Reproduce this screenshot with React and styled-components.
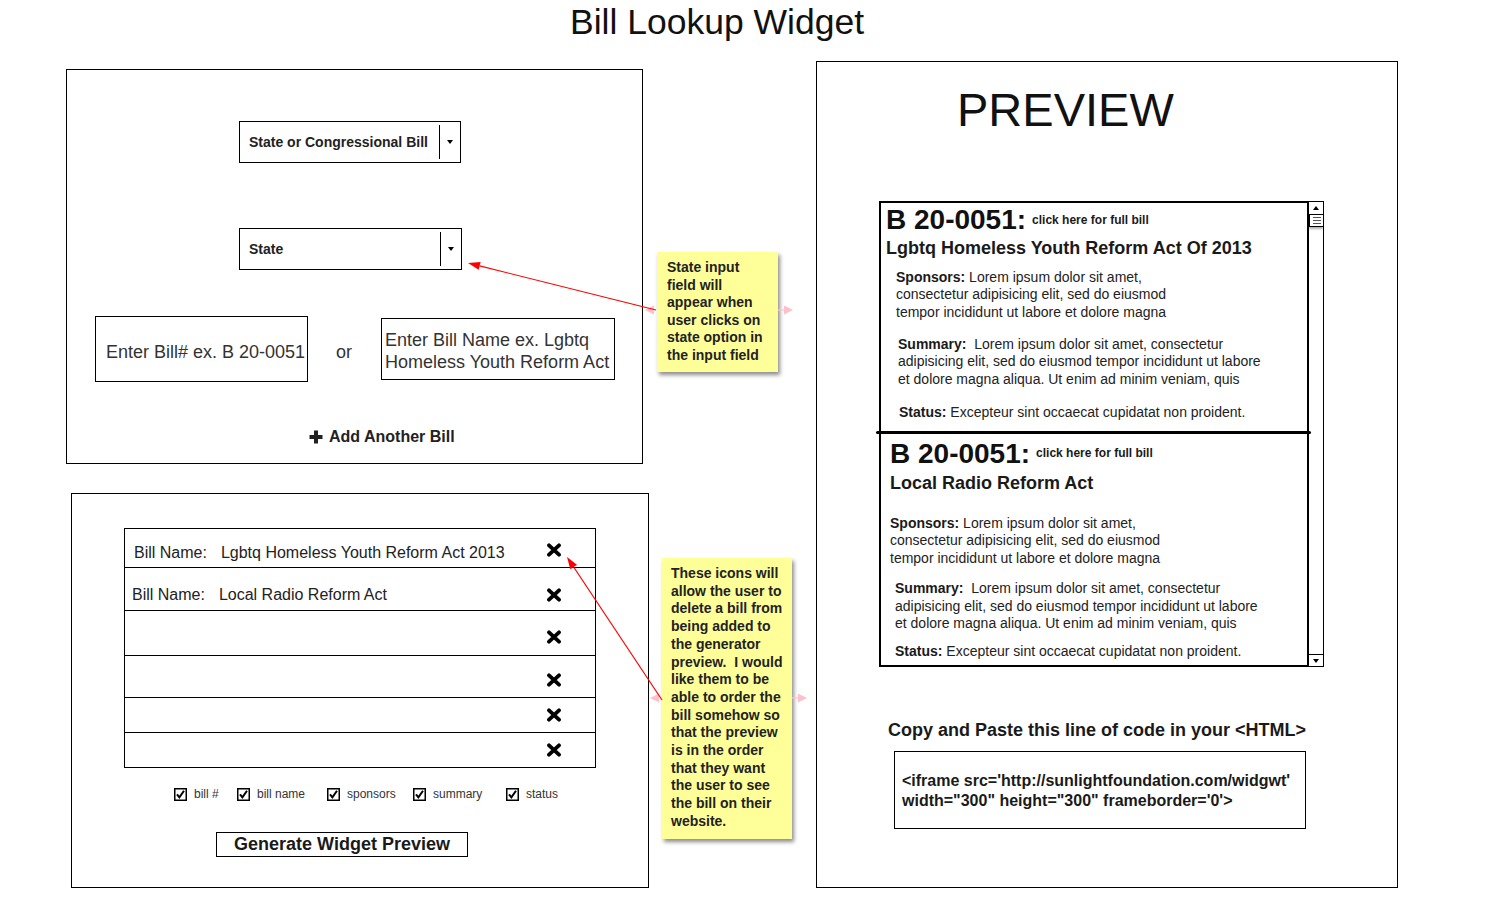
import React from 'react';
import styled, { createGlobalStyle } from 'styled-components';

const GlobalStyle = createGlobalStyle`
  html, body { margin: 0; padding: 0; background: #fff; }
  body { font-family: "Liberation Sans", Arial, Helvetica, sans-serif; color: #222; }
  *, *::before, *::after { box-sizing: border-box; }
`;

const Page = styled.div`
  position: relative;
  width: 1512px;
  height: 924px;
  overflow: hidden;
`;

const Title = styled.h1`
  margin: 0;
  width: 1434px;
  height: 61px;
  padding-top: 2px;
  font-size: 35.5px;
  font-weight: 400;
  line-height: 41px;
  text-align: center;
  color: #111;
`;

const Board = styled.div`
  display: flex;
  align-items: flex-start;
`;

const LeftColumn = styled.div`
  width: 649px;
  padding-top: 8px;
  display: flex;
  flex-direction: column;
  align-items: flex-start;
`;

const Panel = styled.section`
  margin-left: ${(p) => p.$left}px;
  margin-top: ${(p) => p.$top || 0}px;
  width: ${(p) => p.$w}px;
  height: ${(p) => p.$h}px;
  padding-top: ${(p) => p.$pt || 0}px;
  border: 1px solid #000;
  display: flex;
  flex-direction: column;
  align-items: flex-start;
  background: #fff;
`;

/* ---------- select ---------- */
const SelectBox = styled.div`
  margin-left: 172px;
  margin-top: ${(p) => p.$mt || 0}px;
  width: ${(p) => p.$w}px;
  height: 42px;
  border: 1px solid #000;
  display: flex;
  align-items: stretch;
`;
const SelectLabel = styled.span`
  flex: 1;
  display: flex;
  align-items: center;
  padding-left: 9px;
  font-size: 14px;
  font-weight: 700;
  color: #222;
`;
const SelectDivider = styled.span`
  width: 1px;
  margin: 3px 0;
  background: #000;
`;
const SelectArrow = styled.span`
  width: 20px;
  display: flex;
  align-items: center;
  justify-content: center;
  &::after {
    content: '';
    border-left: 3.5px solid transparent;
    border-right: 3.5px solid transparent;
    border-top: 4px solid #000;
  }
`;

const Select = ({ w, mt, children }) => (
  <SelectBox $w={w} $mt={mt}>
    <SelectLabel>{children}</SelectLabel>
    <SelectDivider />
    <SelectArrow />
  </SelectBox>
);

/* ---------- inputs ---------- */
const InputRow = styled.div`
  margin: 46px 0 0 28px;
  display: flex;
  align-items: center;
`;
const TextField = styled.div`
  width: ${(p) => p.$w}px;
  height: ${(p) => p.$h}px;
  border: 1px solid #000;
  display: flex;
  align-items: center;
  padding: ${(p) => p.$pad};
  font-size: 18px;
  line-height: 22px;
  color: #333;
  white-space: nowrap;
`;
const OrText = styled.span`
  margin: 0 29px 0 28px;
  padding-top: 6px;
  font-size: 18px;
  color: #333;
`;

const AddBill = styled.div`
  margin: 46px 0 0 242px;
  display: flex;
  align-items: center;
  gap: 6px;
  font-size: 16px;
  font-weight: 700;
  line-height: 18px;
  color: #222;
`;

/* ---------- bill list ---------- */
const BillList = styled.div`
  margin-left: 52px;
  width: 472px;
  border: 1px solid #000;
  display: flex;
  flex-direction: column;
`;
const BillRow = styled.div`
  height: ${(p) => p.$h}px;
  padding-left: ${(p) => p.$pl || 0}px;
  padding-top: ${(p) => p.$pt || 0}px;
  border-bottom: ${(p) => (p.$last ? 'none' : '1px solid #000')};
  display: flex;
  align-items: center;
  font-size: 16px;
  color: #222;
`;
const RowLabel = styled.span`
  flex: 1;
  white-space: nowrap;
`;
const RowValue = styled.span`
  margin-left: 14px;
`;
const DeleteBox = styled.span`
  display: flex;
  margin-right: 33px;
  margin-top: ${(p) => p.$mt || 0}px;
`;

const DeleteIcon = ({ mt }) => (
  <DeleteBox $mt={mt}>
    <svg width="16" height="14" viewBox="0 0 16 14" aria-hidden="true">
      <path d="M3 2.3 L13 11.7 M13 2.3 L3 11.7" stroke="#000" strokeWidth="3.8" strokeLinecap="round" />
    </svg>
  </DeleteBox>
);

const CheckRow = styled.div`
  margin: 20px 0 0 102px;
  display: flex;
  align-items: center;
`;
const CheckItem = styled.label`
  width: ${(p) => (p.$w ? `${p.$w}px` : 'auto')};
  display: flex;
  align-items: center;
  gap: 7px;
  font-size: 12px;
  line-height: 13px;
  color: #333;
`;
const CheckBox = () => (
  <svg width="13" height="13" viewBox="0 0 13 13" aria-hidden="true">
    <rect x="0.75" y="0.75" width="11.5" height="11.5" fill="#fff" stroke="#000" strokeWidth="1.5" />
    <path d="M3 6.4 L5.4 9.4 L10 2.8" fill="none" stroke="#000" strokeWidth="2" />
  </svg>
);

const GenerateButton = styled.button`
  margin: 31px 0 0 144px;
  width: 252px;
  height: 25px;
  padding: 0;
  border: 1px solid #000;
  background: #fff;
  display: flex;
  align-items: center;
  justify-content: center;
  font-family: "Liberation Sans", Arial, sans-serif;
  font-size: 18px;
  font-weight: 700;
  color: #1a1a1a;
`;

/* ---------- sticky notes ---------- */
const NotesColumn = styled.div`
  width: 167px;
  display: flex;
  flex-direction: column;
  align-items: flex-start;
`;
const Sticky = styled.aside`
  margin: ${(p) => p.$mt}px 0 0 ${(p) => p.$ml}px;
  width: ${(p) => p.$w}px;
  height: ${(p) => p.$h}px;
  padding: 7px 0 0 ${(p) => p.$pl}px;
  background: #ffff9a;
  box-shadow: 2px 3px 4px rgba(0, 0, 0, 0.45);
  font-size: 14px;
  font-weight: 700;
  line-height: ${(p) => p.$lh}px;
  color: #222;
  white-space: nowrap;
`;

/* ---------- preview ---------- */
const PreviewPanel = styled(Panel)``;

const PreviewHeading = styled.h2`
  margin: 21px 0 0 140px;
  font-size: 47px;
  font-weight: 400;
  line-height: 54px;
  color: #111;
`;
const PreviewFrame = styled.div`
  margin: 64px 0 0 62px;
  width: 445px;
  height: 466px;
  display: flex;
`;
const ContentArea = styled.div`
  width: 430px;
  border: 2px solid #000;
  display: flex;
  flex-direction: column;
  align-items: flex-start;
`;
const Scrollbar = styled.div`
  width: 15px;
  border: 1px solid #000;
  border-left: none;
  display: flex;
  flex-direction: column;
`;
const ScrollButton = styled.div`
  height: 12px;
  display: flex;
  align-items: center;
  justify-content: center;
  border-top: ${(p) => (p.$down ? '1px solid #000' : 'none')};
  &::after {
    content: '';
    border-left: 3px solid transparent;
    border-right: 3px solid transparent;
    ${(p) => (p.$down ? 'border-top: 4px solid #000;' : 'border-bottom: 4px solid #000;')}
  }
`;
const ScrollThumb = styled.div`
  height: 13px;
  border: 1px solid #000;
  border-right: none;
  background: #fff;
  box-shadow: 0 2px 2px rgba(0, 0, 0, 0.3);
  display: flex;
  flex-direction: column;
  justify-content: center;
  align-items: center;
  gap: 2px;
`;
const Grip = styled.span`
  width: 8px;
  height: 1px;
  background: #555;
`;
const ScrollTrack = styled.div`
  flex: 1;
`;

const BillCard = styled.div`
  display: flex;
  flex-direction: column;
  align-items: flex-start;
  padding-top: ${(p) => p.$pt || 0}px;
`;
const BillHead = styled.div`
  display: flex;
  align-items: flex-start;
  padding-left: ${(p) => p.$pl}px;
`;
const BillNumber = styled.span`
  font-size: 28px;
  font-weight: 700;
  line-height: 28px;
  color: #111;
`;
const FullLink = styled.span`
  margin: ${(p) => p.$mt}px 0 0 6px;
  font-size: 12px;
  font-weight: 700;
  line-height: 14px;
  color: #1a1a1a;
`;
const BillTitle = styled.div`
  margin-top: ${(p) => p.$mt}px;
  padding-left: ${(p) => p.$pl}px;
  font-size: 18px;
  font-weight: 700;
  line-height: 21px;
  color: #1a1a1a;
`;
const Field = styled.div`
  margin-top: ${(p) => p.$mt}px;
  padding-left: ${(p) => p.$pl}px;
  font-size: 14px;
  line-height: 17.5px;
  color: #222;
  white-space: nowrap;
  b { color: #1a1a1a; }
`;
const CardDivider = styled.div`
  align-self: stretch;
  height: 3px;
  margin: 10px -4px 0 -5px;
  border-radius: 2px;
  background: #000;
`;

const CopyLabel = styled.div`
  margin: 53px 0 0 71px;
  font-size: 18px;
  font-weight: 700;
  line-height: 21px;
  color: #1a1a1a;
`;
const CodeBox = styled.div`
  margin: 10px 0 0 77px;
  width: 412px;
  height: 78px;
  padding: 19px 0 0 7px;
  border: 1px solid #000;
  font-size: 16px;
  font-weight: 700;
  line-height: 20px;
  color: #1a1a1a;
  white-space: nowrap;
`;

/* ---------- connectors ---------- */
const Connectors = styled.svg`
  position: absolute;
  left: 0;
  top: 0;
  pointer-events: none;
`;

const head = (tx, ty, fx, fy, len = 12, half = 4) => {
  const dx = fx - tx;
  const dy = fy - ty;
  const d = Math.hypot(dx, dy);
  const ux = dx / d;
  const uy = dy / d;
  const bx = tx + ux * len;
  const by = ty + uy * len;
  return {
    bx,
    by,
    points: `${tx},${ty} ${bx - uy * half},${by + ux * half} ${bx + uy * half},${by - ux * half}`,
  };
};

const RedArrow = ({ from, to }) => {
  const h = head(to[0], to[1], from[0], from[1]);
  return (
    <g>
      <line x1={from[0]} y1={from[1]} x2={h.bx} y2={h.by} stroke="#f00" strokeWidth="1.2" />
      <polygon points={h.points} fill="#f00" />
    </g>
  );
};

const PinkNub = ({ tip, dir, stub }) => {
  const base = tip[0] - dir * 9;
  return (
    <g>
      {stub && <line x1={stub} y1={tip[1]} x2={base} y2={tip[1]} stroke="#ffc4cc" strokeWidth="1.2" />}
      <polygon points={`${tip[0]},${tip[1]} ${base},${tip[1] - 4.5} ${base},${tip[1] + 4.5}`} fill="#ffc0ca" />
    </g>
  );
};

export default function App() {
  return (
    <Page>
      <GlobalStyle />
      <Title>Bill Lookup Widget</Title>
      <Board>
        <LeftColumn>
          <Panel $left={66} $w={577} $h={395} $pt={51}>
            <Select w={222}>State or Congressional Bill</Select>
            <Select w={223} mt={65}>State</Select>
            <InputRow>
              <TextField $w={213} $h={66} $pad="6px 0 0 10px">Enter Bill# ex. B 20-0051</TextField>
              <OrText>or</OrText>
              <TextField $w={234} $h={62} $pad="4px 0 0 3px">
                Enter Bill Name ex. Lgbtq
                <br />
                Homeless Youth Reform Act
              </TextField>
            </InputRow>
            <AddBill>
              <svg width="14" height="14" viewBox="0 0 14 14" aria-hidden="true">
                <rect x="5" y="0.5" width="4" height="13" fill="#222" />
                <rect x="0.5" y="5" width="13" height="4" fill="#222" />
              </svg>
              Add Another Bill
            </AddBill>
          </Panel>

          <Panel $left={71} $top={29} $w={578} $h={395} $pt={34}>
            <BillList>
              <BillRow $h={39} $pl={9} $pt={10}>
                <RowLabel>
                  Bill Name:<RowValue>Lgbtq Homeless Youth Reform Act 2013</RowValue>
                </RowLabel>
                <DeleteIcon mt={-7} />
              </BillRow>
              <BillRow $h={43} $pl={7} $pt={11}>
                <RowLabel>
                  Bill Name:<RowValue>Local Radio Reform Act</RowValue>
                </RowLabel>
                <DeleteIcon mt={0} />
              </BillRow>
              <BillRow $h={45}>
                <RowLabel />
                <DeleteIcon mt={7} />
              </BillRow>
              <BillRow $h={42}>
                <RowLabel />
                <DeleteIcon mt={6} />
              </BillRow>
              <BillRow $h={35}>
                <RowLabel />
                <DeleteIcon />
              </BillRow>
              <BillRow $h={34} $last>
                <RowLabel />
                <DeleteIcon />
              </BillRow>
            </BillList>

            <CheckRow>
              <CheckItem $w={63}><CheckBox />bill #</CheckItem>
              <CheckItem $w={90}><CheckBox />bill name</CheckItem>
              <CheckItem $w={86}><CheckBox />sponsors</CheckItem>
              <CheckItem $w={93}><CheckBox />summary</CheckItem>
              <CheckItem><CheckBox />status</CheckItem>
            </CheckRow>

            <GenerateButton type="button">Generate Widget Preview</GenerateButton>
          </Panel>
        </LeftColumn>

        <NotesColumn>
          <Sticky $mt={191} $ml={8} $w={121} $h={120} $pl={10} $lh={17.5}>
            State input<br />
            field will<br />
            appear when<br />
            user clicks on<br />
            state option in<br />
            the input field
          </Sticky>
          <Sticky $mt={186} $ml={13} $w={130} $h={281} $pl={9} $lh={17.7}>
            These icons will<br />
            allow the user to<br />
            delete a bill from<br />
            being added to<br />
            the generator<br />
            preview.&nbsp; I would<br />
            like them to be<br />
            able to order the<br />
            bill somehow so<br />
            that the preview<br />
            is in the order<br />
            that they want<br />
            the user to see<br />
            the bill on their<br />
            website.
          </Sticky>
        </NotesColumn>

        <PreviewPanel $left={0} $w={582} $h={827}>
          <PreviewHeading>PREVIEW</PreviewHeading>
          <PreviewFrame>
            <ContentArea>
              <BillCard $pt={3}>
                <BillHead $pl={5}>
                  <BillNumber>B 20-0051:</BillNumber>
                  <FullLink $mt={7}>click here for full bill</FullLink>
                </BillHead>
                <BillTitle $mt={3.5} $pl={5}>Lgbtq Homeless Youth Reform Act Of 2013</BillTitle>
                <Field $mt={10} $pl={15}>
                  <b>Sponsors:</b> Lorem ipsum dolor sit amet,<br />
                  consectetur adipisicing elit, sed do eiusmod<br />
                  tempor incididunt ut labore et dolore magna
                </Field>
                <Field $mt={14.5} $pl={17}>
                  <b>Summary:</b>&nbsp; Lorem ipsum dolor sit amet, consectetur<br />
                  adipisicing elit, sed do eiusmod tempor incididunt ut labore<br />
                  et dolore magna aliqua. Ut enim ad minim veniam, quis
                </Field>
                <Field $mt={15.5} $pl={18}>
                  <b>Status:</b> Excepteur sint occaecat cupidatat non proident.
                </Field>
              </BillCard>
              <CardDivider />
              <BillCard $pt={6}>
                <BillHead $pl={9}>
                  <BillNumber>B 20-0051:</BillNumber>
                  <FullLink $mt={6}>click here for full bill</FullLink>
                </BillHead>
                <BillTitle $mt={5} $pl={9}>Local Radio Reform Act</BillTitle>
                <Field $mt={20.5} $pl={9}>
                  <b>Sponsors:</b> Lorem ipsum dolor sit amet,<br />
                  consectetur adipisicing elit, sed do eiusmod<br />
                  tempor incididunt ut labore et dolore magna
                </Field>
                <Field $mt={13} $pl={14}>
                  <b>Summary:</b>&nbsp; Lorem ipsum dolor sit amet, consectetur<br />
                  adipisicing elit, sed do eiusmod tempor incididunt ut labore<br />
                  et dolore magna aliqua. Ut enim ad minim veniam, quis
                </Field>
                <Field $mt={10} $pl={14}>
                  <b>Status:</b> Excepteur sint occaecat cupidatat non proident.
                </Field>
              </BillCard>
            </ContentArea>
            <Scrollbar>
              <ScrollButton />
              <ScrollThumb>
                <Grip />
                <Grip />
                <Grip />
              </ScrollThumb>
              <ScrollTrack />
              <ScrollButton $down />
            </Scrollbar>
          </PreviewFrame>
          <CopyLabel>Copy and Paste this line of code in your &lt;HTML&gt;</CopyLabel>
          <CodeBox>
            &lt;iframe src='http://sunlightfoundation.com/widgwt'<br />
            width="300" height="300" frameborder='0'&gt;
          </CodeBox>
        </PreviewPanel>
      </Board>

      <Connectors width="1512" height="924" viewBox="0 0 1512 924">
        <PinkNub tip={[645, 310]} dir={-1} />
        <PinkNub tip={[793, 310]} dir={1} stub={778} />
        <PinkNub tip={[650, 698]} dir={-1} />
        <PinkNub tip={[807, 698]} dir={1} stub={792} />
        <RedArrow from={[656, 310]} to={[468, 263]} />
        <RedArrow from={[662, 700]} to={[567, 557]} />
      </Connectors>
    </Page>
  );
}
